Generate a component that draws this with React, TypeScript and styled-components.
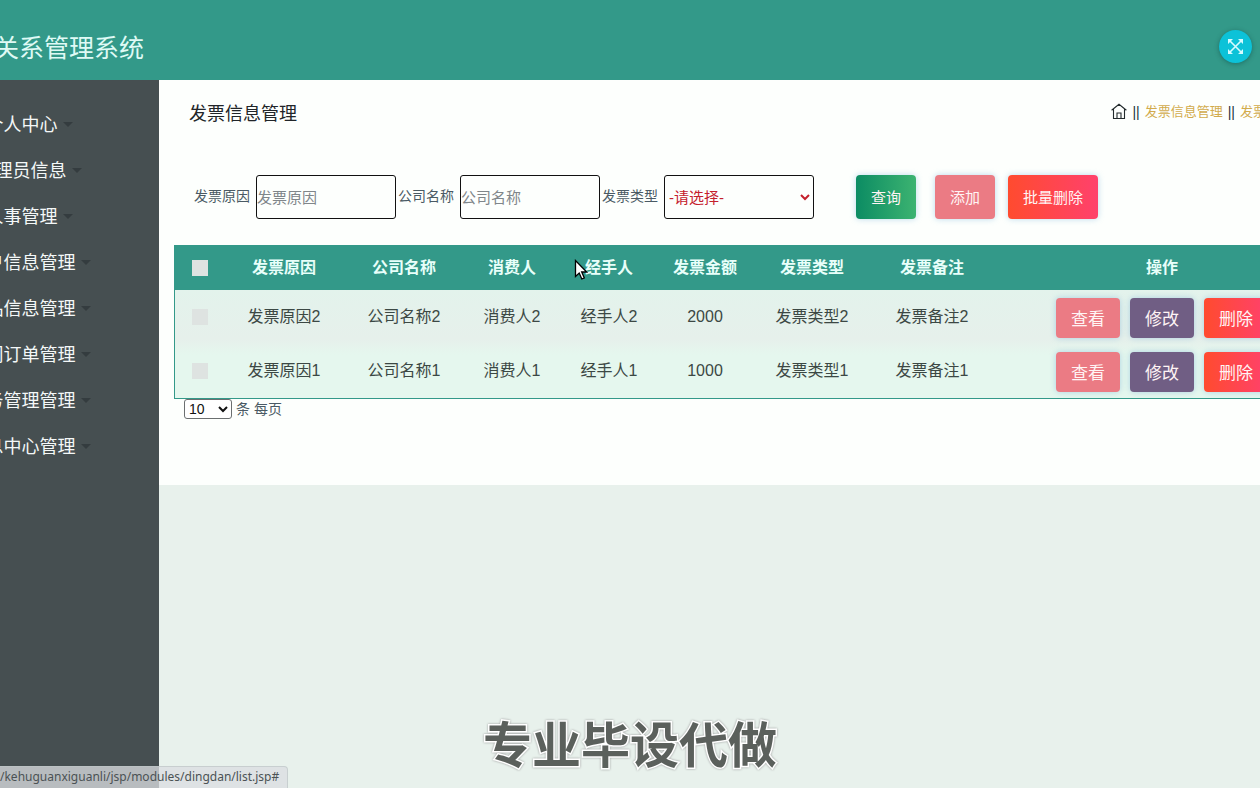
import React from "react";
import styled, { createGlobalStyle, css } from "styled-components";

const GlobalStyle = createGlobalStyle`
  * { box-sizing: border-box; }
  body {
    margin: 0;
    background: #e8f1ec;
    color: #4a5a64;
    font: 14px/20px "Liberation Sans", "Noto Sans CJK SC", sans-serif;
  }
  button, input, select { font-family: inherit; }
`;

const Viewport = styled.div`
  position: relative;
  min-height: 100vh;
  display: flex;
  overflow: hidden;
`;

/* The page is wider than the window and scrolled sideways. */
const Page = styled.div`
  flex: none;
  width: calc(100% + 189px);
  margin-left: -101px;
  display: flex;
  flex-direction: column;
`;

const Header = styled.header`
  height: 80px;
  flex: none;
  padding: 0 96px 0 45px;
  display: flex;
  align-items: center;
  justify-content: space-between;
  background: #339989;
`;

const Brand = styled.h1`
  margin: 0;
  padding-top: 16px;
  color: #dffaf5;
  font-size: 25px;
  line-height: 32px;
  font-weight: 400;
`;

const RoundButton = styled.button`
  width: 33px;
  height: 33px;
  margin-top: 12px;
  padding: 0;
  display: flex;
  align-items: center;
  justify-content: center;
  border: 0;
  border-radius: 50%;
  background: #0cc2d8;
  color: #d5fbff;
  box-shadow: 0 1px 5px rgba(0, 50, 50, 0.4);
`;

const Body = styled.div`
  flex: 1;
  display: flex;
`;

const Sidebar = styled.nav`
  width: 260px;
  flex: none;
  padding-top: 21px;
  background: #464f51;
`;

const MenuLink = styled.a`
  height: 46px;
  display: flex;
  align-items: center;
  justify-content: center;
  gap: 5px;
  color: #f4f8f8;
  font-size: 18px;
  line-height: 24px;
  text-decoration: none;
  white-space: nowrap;

  span { padding-top: 2px; }

  &::after {
    content: "";
    border: 5px solid transparent;
    border-top-color: #343c3f;
    border-bottom: 0;
  }
`;

const Main = styled.main`
  flex: 1;
  min-width: 0;
`;

const Panel = styled.section`
  padding: 0 15px 66px;
  background: #fdfffd;
`;

const TitleBar = styled.div`
  height: 65px;
  padding: 0 15px;
  display: flex;
  align-items: center;
  justify-content: space-between;
`;

const Title = styled.h2`
  margin: 0;
  padding-top: 2px;
  color: #212529;
  font-size: 18px;
  line-height: 24px;
  font-weight: 400;
`;

const Crumbs = styled.div`
  padding-bottom: 2px;
  display: flex;
  align-items: center;
  gap: 5px;
  font-size: 13px;
  white-space: nowrap;
`;

const CrumbLink = styled.a`
  color: #d2ab4c;
  text-decoration: none;
`;

const Separator = styled.span`
  color: #22343c;
  font-size: 14px;
`;

const HomeLink = styled.a`
  display: flex;
  color: #222a2c;
`;

const SearchForm = styled.form`
  height: 44px;
  margin: 30px 0 26px;
  padding-left: 20px;
  display: flex;
  align-items: center;
  gap: 2px;
  white-space: nowrap;
`;

const Field = styled.div`
  display: flex;
  align-items: center;
  gap: 6px;

  label { padding-bottom: 2px; }
`;

const control = css`
  height: 44px;
  border: 1px solid #111;
  border-radius: 3px;
  background: #fdfffd;
  font-size: 15px;
`;

const TextInput = styled.input`
  ${control}
  width: 140px;
  padding: 0;
  color: #444;

  &::placeholder { color: #80868a; }
`;

const TypeSelect = styled.select`
  ${control}
  width: 150px;
  padding: 0;
  color: #c4202c;
`;

const Actions = styled.div`
  margin-left: 40px;
  display: flex;
  gap: 19px;
`;

const EditActions = styled.div`
  display: flex;
  gap: 13px;
`;

const tones = {
  green: "linear-gradient(90deg, #0c8c63, #3cb371)",
  pink: "#eb7b84",
  purple: "#705e84",
  red: "linear-gradient(90deg, #ff4b2f, #ff416c)",
};

const Button = styled.button<{ $tone: keyof typeof tones; $row?: boolean }>`
  height: ${(p) => (p.$row ? 40 : 44)}px;
  padding: 0 15px 2px;
  border: 0;
  border-radius: 4px;
  background: ${(p) => tones[p.$tone]};
  color: #fff4f4;
  font-size: ${(p) => (p.$row ? 17 : 15)}px;
  white-space: nowrap;
  box-shadow: 0 0 6px rgba(90, 160, 210, 0.4);
`;

const Table = styled.table`
  width: 100%;
  table-layout: fixed;
  border-collapse: separate;
  border-spacing: 0;
  border: 1px solid #339989;
  border-top: 0;
  text-align: center;
  font-size: 16px;
  color: #3c4844;

  thead { background: #339989; }
  tbody { background: linear-gradient(#e3f3ec, #e6f0eb 45%, #e5f7ee 60%, #e5f7ee); }
`;

const Th = styled.th`
  height: 45px;
  padding: 0;
  color: #e8fffa;
`;

const Td = styled.td`
  height: 54px;
  padding: 0;
`;

const Check = styled.input`
  appearance: none;
  display: block;
  width: 16px;
  height: 16px;
  margin: 0 auto;
  background: #dee3e1;
`;

const RowActions = styled.div`
  padding-top: 2px;
  display: flex;
  justify-content: center;
  gap: 10px;
`;

const Pager = styled.label`
  padding-left: 10px;
  display: flex;
  align-items: center;
  gap: 4px;
`;

const SizeSelect = styled.select`
  width: 48px;
  height: 20px;
  padding: 0;
  border: 1px solid #6b6f70;
  border-radius: 3px;
  background: #fff;
  color: #111;
  font-size: 14px;
`;

const Caption = styled.div`
  position: absolute;
  left: 0;
  right: 0;
  bottom: 10px;
  text-align: center;
  color: #5b605c;
  font-size: 49px;
  line-height: 64px;
  font-weight: 700;
  -webkit-text-stroke: 3px #fff;
  paint-order: stroke fill;
  filter: drop-shadow(0 0 1px #999);
  pointer-events: none;
`;

const StatusBar = styled.div`
  position: absolute;
  left: 0;
  bottom: 0;
  height: 22px;
  padding-right: 8px;
  border-top: 1px solid rgba(190, 198, 198, 0.7);
  border-right: 1px solid rgba(190, 198, 198, 0.7);
  border-top-right-radius: 4px;
  background: rgba(218, 221, 225, 0.77);
  color: #4b5254;
  font: 12px/20px "Noto Sans", sans-serif;
`;

const Pointer = styled.svg`
  position: absolute;
  left: 574px;
  top: 259px;
`;

const menu = [
  "个人中心",
  "管理员信息",
  "人事管理",
  "客户信息管理",
  "商品信息管理",
  "合同订单管理",
  "服务管理管理",
  "信息中心管理",
];

const columns = [
  { label: "发票原因", width: 120 },
  { label: "公司名称", width: 120 },
  { label: "消费人", width: 96 },
  { label: "经手人", width: 98 },
  { label: "发票金额", width: 94 },
  { label: "发票类型", width: 120 },
  { label: "发票备注", width: 120 },
];

const rows = [
  ["发票原因2", "公司名称2", "消费人2", "经手人2", "2000", "发票类型2", "发票备注2"],
  ["发票原因1", "公司名称1", "消费人1", "经手人1", "1000", "发票类型1", "发票备注1"],
];

function ExpandIcon() {
  return (
    <svg width="17" height="17" viewBox="0 0 17 17" fill="none" stroke="currentColor" strokeWidth="1.6">
      <path d="M2 2l13 13M15 2L2 15" />
      <path d="M1 1h5L1 6zM16 1v5l-5-5zM16 16h-5l5-5zM1 16v-5l5 5z" fill="currentColor" stroke="none" />
    </svg>
  );
}

function HomeIcon() {
  return (
    <svg width="16" height="17" viewBox="0 0 16 17" fill="none" stroke="currentColor" strokeWidth="1.1">
      <path d="M.6 7.200L8 1.200l7.400 6M2.500 6v9.500h11V6M6 15.500V10h4v5.500" />
    </svg>
  );
}

export default function App() {
  return (
    <Viewport>
      <GlobalStyle />
      <Page>
        <Header>
          <Brand>客户关系管理系统</Brand>
          <RoundButton type="button" aria-label="全屏">
            <ExpandIcon />
          </RoundButton>
        </Header>
        <Body>
          <Sidebar>
            {menu.map((item) => (
              <MenuLink href="#" key={item}><span>{item}</span></MenuLink>
            ))}
          </Sidebar>
          <Main>
            <Panel>
              <TitleBar>
                <Title>发票信息管理</Title>
                <Crumbs>
                  <HomeLink href="#" aria-label="首页"><HomeIcon /></HomeLink>
                  <Separator>||</Separator>
                  <CrumbLink href="#">发票信息管理</CrumbLink>
                  <Separator>||</Separator>
                  <CrumbLink href="#">发票信息列表</CrumbLink>
                </Crumbs>
              </TitleBar>
              <SearchForm onSubmit={(e) => e.preventDefault()}>
                <Field>
                  <label htmlFor="reason">发票原因</label>
                  <TextInput id="reason" placeholder="发票原因" />
                </Field>
                <Field>
                  <label htmlFor="company">公司名称</label>
                  <TextInput id="company" placeholder="公司名称" />
                </Field>
                <Field>
                  <label htmlFor="type">发票类型</label>
                  <TypeSelect id="type">
                    <option>-请选择-</option>
                  </TypeSelect>
                </Field>
                <Actions>
                  <Button $tone="green" type="submit">查询</Button>
                  <EditActions>
                    <Button $tone="pink" type="button">添加</Button>
                    <Button $tone="red" type="button">批量删除</Button>
                  </EditActions>
                </Actions>
              </SearchForm>
              <Table>
                <colgroup>
                  <col width={49} />
                  {columns.map((c) => <col key={c.label} width={c.width} />)}
                  <col />
                </colgroup>
                <thead>
                  <tr>
                    <Th><Check type="checkbox" aria-label="全选" /></Th>
                    {columns.map((c) => <Th key={c.label}>{c.label}</Th>)}
                    <Th>操作</Th>
                  </tr>
                </thead>
                <tbody>
                  {rows.map((row) => (
                    <tr key={row[0]}>
                      <Td><Check type="checkbox" aria-label={row[0]} /></Td>
                      {row.map((cell) => <Td key={cell}>{cell}</Td>)}
                      <Td>
                        <RowActions>
                          <Button $row $tone="pink" type="button">查看</Button>
                          <Button $row $tone="purple" type="button">修改</Button>
                          <Button $row $tone="red" type="button">删除</Button>
                        </RowActions>
                      </Td>
                    </tr>
                  ))}
                </tbody>
              </Table>
              <Pager>
                <SizeSelect>
                  <option>10</option>
                </SizeSelect>
                条 每页
              </Pager>
            </Panel>
          </Main>
        </Body>
      </Page>
      <Caption>专业毕设代做</Caption>
      <StatusBar>/kehuguanxiguanli/jsp/modules/dingdan/list.jsp#</StatusBar>
      <Pointer width="14" height="22" viewBox="0 0 14 22" aria-hidden="true">
        <path d="M1.500 1.500v16l3.700-3.500 2.600 6 2.500-1.100-2.600-5.900h5z" fill="#fff" stroke="#000" strokeWidth="1.300" />
      </Pointer>
    </Viewport>
  );
}
